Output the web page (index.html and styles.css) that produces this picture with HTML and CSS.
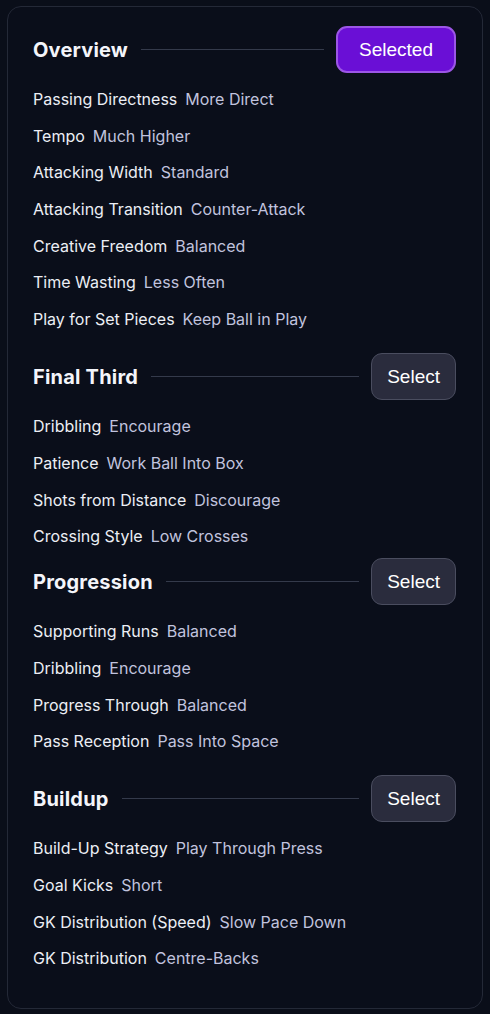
FILE: index.html
```html
<!DOCTYPE html>
<html lang="en">
<head>
  <meta charset="UTF-8" />
  <title>Tactics Overview</title>
  <link rel="stylesheet" href="styles.css">
</head>
<body>
  <div class="card">

    <section class="section">
      <div class="section-head">
        <h2>Overview</h2>
        <div class="rule"></div>
        <button class="btn btn-selected">Selected</button>
      </div>
      <ul class="rows">
        <li><span class="label">Passing Directness</span><span class="value">More Direct</span></li>
        <li><span class="label">Tempo</span><span class="value">Much Higher</span></li>
        <li><span class="label">Attacking Width</span><span class="value">Standard</span></li>
        <li><span class="label">Attacking Transition</span><span class="value">Counter-Attack</span></li>
        <li><span class="label">Creative Freedom</span><span class="value">Balanced</span></li>
        <li><span class="label">Time Wasting</span><span class="value">Less Often</span></li>
        <li><span class="label">Play for Set Pieces</span><span class="value">Keep Ball in Play</span></li>
      </ul>
    </section>

    <section class="section">
      <div class="section-head">
        <h2>Final Third</h2>
        <div class="rule"></div>
        <button class="btn">Select</button>
      </div>
      <ul class="rows">
        <li><span class="label">Dribbling</span><span class="value">Encourage</span></li>
        <li><span class="label">Patience</span><span class="value">Work Ball Into Box</span></li>
        <li><span class="label">Shots from Distance</span><span class="value">Discourage</span></li>
        <li><span class="label">Crossing Style</span><span class="value">Low Crosses</span></li>
      </ul>
    </section>

    <section class="section section-tight">
      <div class="section-head">
        <h2>Progression</h2>
        <div class="rule"></div>
        <button class="btn">Select</button>
      </div>
      <ul class="rows">
        <li><span class="label">Supporting Runs</span><span class="value">Balanced</span></li>
        <li><span class="label">Dribbling</span><span class="value">Encourage</span></li>
        <li><span class="label">Progress Through</span><span class="value">Balanced</span></li>
        <li><span class="label">Pass Reception</span><span class="value">Pass Into Space</span></li>
      </ul>
    </section>

    <section class="section">
      <div class="section-head">
        <h2>Buildup</h2>
        <div class="rule"></div>
        <button class="btn">Select</button>
      </div>
      <ul class="rows">
        <li><span class="label">Build-Up Strategy</span><span class="value">Play Through Press</span></li>
        <li><span class="label">Goal Kicks</span><span class="value">Short</span></li>
        <li><span class="label">GK Distribution (Speed)</span><span class="value">Slow Pace Down</span></li>
        <li><span class="label">GK Distribution</span><span class="value">Centre-Backs</span></li>
      </ul>
    </section>

  </div>
</body>
</html>
```

FILE: styles.css
```css
body {
  margin: 0;
  padding: 6px 7px 5px 7px;
  background-color: #0a0e19;
  font-family: Inter, "Noto Sans", sans-serif;
  color: #eceef5;
}
.card {
  border: 1.5px solid #242937;
  border-radius: 14px;
  background-color: #0a0e1a;
  padding: 19px 26px 38px 25px;
  height: 1003px;
  box-sizing: border-box;
}
.section {
  margin-top: 22px;
}
.section:first-child {
  margin-top: 0;
}
.section-tight {
  margin-top: 10px;
}
.section-head {
  display: flex;
  align-items: center;
  gap: 12px;
}
.section-head h2 {
  margin: 0;
  font-size: 20px;
  font-weight: 700;
  color: #f4f5fa;
  letter-spacing: 0.2px;
}
.rule {
  flex: 1;
  height: 1px;
  background-color: #343a4b;
  margin-left: 1px;
}
.btn {
  font-family: "Liberation Sans", Arial, sans-serif;
  font-size: 19px;
  color: #ffffff;
  height: 47px;
  padding: 0 15px;
  background-color: #2a2c3d;
  border: 1.5px solid #4a4d5f;
  border-radius: 11px;
  cursor: pointer;
}
.btn-selected {
  padding: 0 21px;
  background-color: #6a0fd6;
  border: 2px solid #9c56e6;
}
.rows {
  list-style: none;
  margin: 14px 0 0 0;
  padding: 0;
  display: flex;
  flex-direction: column;
  gap: 12.7px;
}
.rows li {
  line-height: 24px;
  font-size: 16px;
}
.label {
  color: #eceef5;
  margin-right: 8px;
}
.value {
  color: #c1c3de;
}
```
